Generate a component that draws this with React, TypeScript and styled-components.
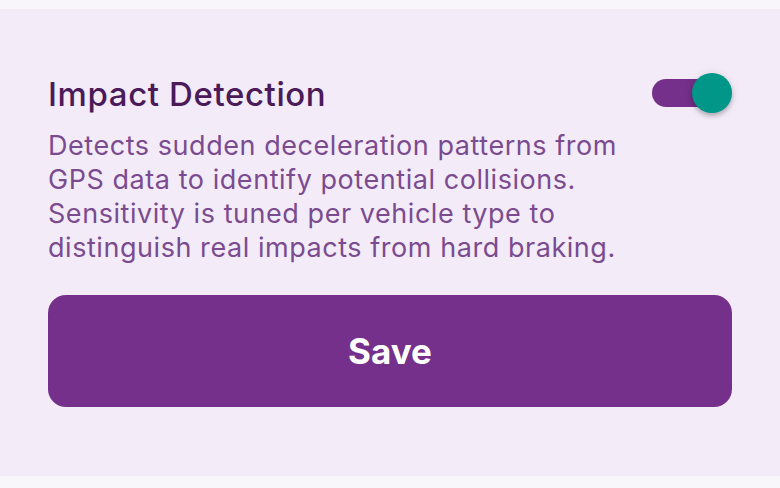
import React, { useState } from 'react';
import styled, { createGlobalStyle } from 'styled-components';

const GlobalStyle = createGlobalStyle`
  html, body {
    margin: 0;
    padding: 0;
    background: #f8f6fa;
  }
  body {
    font-family: Inter, "Noto Sans", "Liberation Sans", sans-serif;
    -webkit-font-smoothing: antialiased;
  }
`;

export default function App() {
  const [enabled, setEnabled] = useState(true);

  return (
    <>
      <GlobalStyle />
      <Page>
        <Panel>
          <SettingRow>
            <TextColumn>
              <Title>Impact Detection</Title>
              <Description>
                Detects sudden deceleration patterns from GPS data to identify
                potential collisions. Sensitivity is tuned per vehicle type to
                distinguish real impacts from hard braking.
              </Description>
            </TextColumn>
            <Switch
              role="switch"
              aria-checked={enabled}
              onClick={() => setEnabled(!enabled)}
            >
              <Track $on={enabled} />
              <Thumb $on={enabled} />
            </Switch>
          </SettingRow>
          <SaveButton type="button">Save</SaveButton>
        </Panel>
      </Page>
    </>
  );
}

const Page = styled.div`
  padding: 9px 0 12px;
`;

const Panel = styled.section`
  background: #f3ebf8;
  padding: 64px 48px 69px;
  display: flex;
  flex-direction: column;
  gap: 30px;
`;

const SettingRow = styled.div`
  display: flex;
  align-items: flex-start;
  gap: 16px;
`;

const TextColumn = styled.div`
  flex: 1;
  display: flex;
  flex-direction: column;
  gap: 15px;
`;

const Title = styled.h2`
  margin: 1px 0 0;
  font-size: 33px;
  line-height: 40px;
  letter-spacing: 0.6px;
  font-weight: 500;
  color: #4a1a59;
`;

const Description = styled.p`
  margin: 0;
  font-size: 27px;
  line-height: 34px;
  letter-spacing: 0.55px;
  font-weight: 400;
  color: #7b4b90;
`;

const Switch = styled.button`
  position: relative;
  flex: none;
  width: 80px;
  height: 40px;
  padding: 0;
  border: none;
  background: transparent;
  cursor: pointer;
`;

const Track = styled.span<{ $on: boolean }>`
  position: absolute;
  left: 0;
  top: 6px;
  width: 72px;
  height: 28px;
  border-radius: 14px;
  background: ${(p) => (p.$on ? '#74308a' : '#bdb3c2')};
`;

const Thumb = styled.span<{ $on: boolean }>`
  position: absolute;
  top: 0;
  left: ${(p) => (p.$on ? '40px' : '0')};
  width: 40px;
  height: 40px;
  border-radius: 50%;
  background: ${(p) => (p.$on ? '#009688' : '#fafafa')};
  box-shadow: 0 3px 4px rgba(0, 0, 0, 0.2), 0 1px 8px rgba(0, 0, 0, 0.12);
`;

const SaveButton = styled.button`
  height: 112px;
  border: none;
  border-radius: 18px;
  background: #74308a;
  color: #ffffff;
  font-family: inherit;
  font-size: 35px;
  font-weight: 700;
  cursor: pointer;
`;
